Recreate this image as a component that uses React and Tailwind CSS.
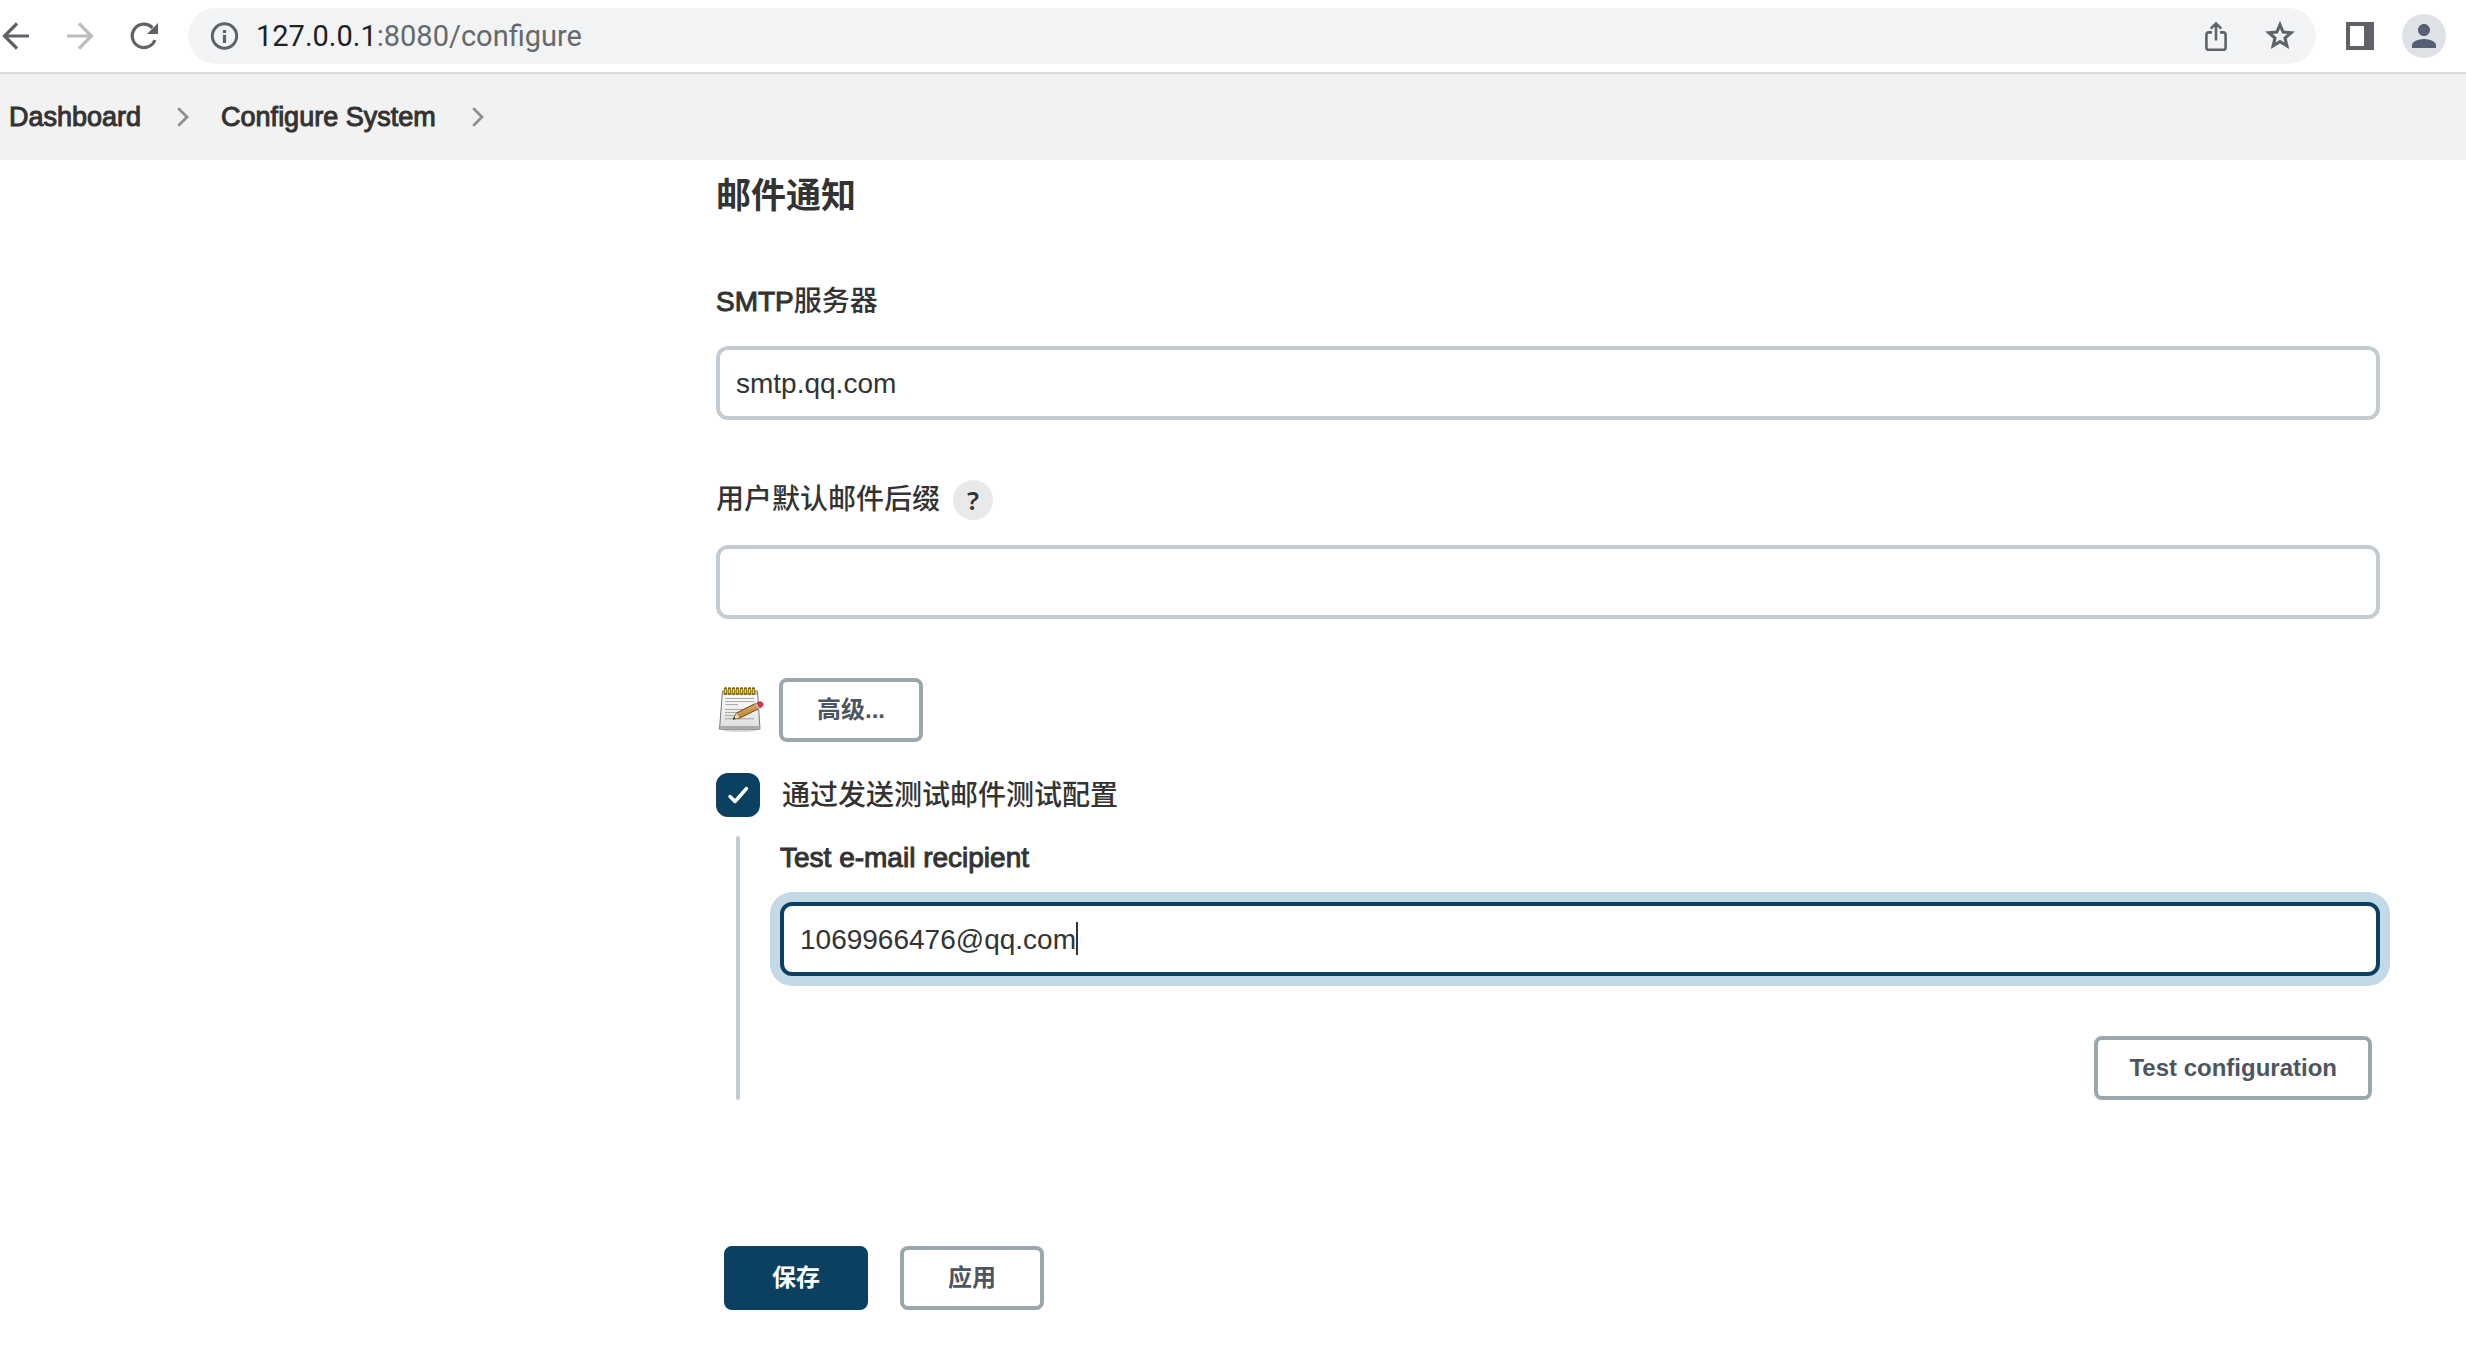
import { useState } from "react";
import { MdPerson } from "react-icons/md";

function BackIcon({ className }) {
  return (
    <svg viewBox="0 0 32 32" className={className} fill="none" stroke="currentColor" strokeWidth="3.2">
      <path d="M29 16H5M17 3.5 4.5 16 17 28.5" />
    </svg>
  );
}

function ReloadIcon() {
  return (
    <svg viewBox="0 0 32 32" className="size-8" fill="none">
      <path d="M26.9 20A11.7 11.7 0 1 1 24.4 7.8" stroke="currentColor" strokeWidth="3.2" />
      <path d="M30 3v11H19z" fill="currentColor" />
    </svg>
  );
}

function InfoIcon() {
  return (
    <svg viewBox="0 0 28 28" className="size-7 text-[#5f6368]" fill="none">
      <circle cx="14.5" cy="14" r="12.2" stroke="currentColor" strokeWidth="3" />
      <path d="M12.9 8h3.2v3h-3.2zM12.9 12.8h3.2V21h-3.2z" fill="currentColor" />
    </svg>
  );
}

function ShareIcon() {
  return (
    <svg viewBox="0 0 32 32" className="size-8" fill="none" stroke="currentColor" strokeWidth="2.6">
      <path d="M12 12.4H9a2.6 2.6 0 0 0-2.6 2.6v12.2A2.6 2.6 0 0 0 9 29.8h14a2.6 2.6 0 0 0 2.6-2.6V15a2.6 2.6 0 0 0-2.6-2.6h-3" />
      <path d="M16 20.5V4M10.8 8.6 16 3.5l5.2 5.1" />
    </svg>
  );
}

function StarIcon() {
  return (
    <svg viewBox="0 0 24 24" className="size-9" fill="none" stroke="currentColor" strokeWidth="2.1">
      <path d="M12 4.5l2.07 4.9 5.3.46-4.02 3.49 1.2 5.18L12 15.78l-4.55 2.75 1.2-5.18-4.02-3.49 5.3-.46z" />
    </svg>
  );
}

function SidePanelIcon() {
  return (
    <svg viewBox="0 0 28 28" className="size-7">
      <path d="M0 0h28v28H0zM4 4v20h14V4z" fill="#5f6368" fillRule="evenodd" />
    </svg>
  );
}

function Chevron() {
  return (
    <svg viewBox="0 0 12 20" className="h-5 w-3 text-[#8f8f8f]" fill="none" stroke="currentColor" strokeWidth="2.8" strokeLinecap="round">
      <path d="M2 2l8 8-8 8" />
    </svg>
  );
}

function NotepadIcon() {
  return (
    <svg viewBox="0 0 48 48" className="size-12 shrink-0" fill="none">
      <defs>
        <linearGradient id="paper" x1="0" y1="0" x2="0" y2="1">
          <stop offset="0" stopColor="#ffffff" />
          <stop offset="1" stopColor="#dedede" />
        </linearGradient>
        <linearGradient id="wood" x1="0" y1="0" x2="0.5" y2="1">
          <stop offset="0" stopColor="#f0c070" />
          <stop offset="1" stopColor="#b97a2c" />
        </linearGradient>
      </defs>
      <ellipse cx="24" cy="44.2" rx="17" ry="1.8" fill="#000" opacity="0.15" />
      <path d="M6.5 5h35L44 43.2H3.5z" fill="url(#paper)" stroke="#777" strokeWidth="1" />
      <path d="M6.4 5h35.2l.3 4H6.2z" fill="#999" opacity="0.6" />
      <path d="M4.2 40h39.4l.2 2.8H4z" fill="#a9a9a9" />
      <path
        d="M9 12.5h29M9 15.6h29M9 18.6h13M9 23.4h29M9 26.6h22M9 29.6h16M9 32.8h29"
        stroke="#a6a6a6"
        strokeWidth="1"
      />
      <path
        d="M9.5 2.6v5M13.5 2.6v5M17.5 2.6v5M21.5 2.6v5M25.5 2.6v5M29.5 2.6v5M33.5 2.6v5M37.5 2.6v5"
        stroke="#7c6710"
        strokeWidth="3.2"
        strokeLinecap="round"
      />
      <path
        d="M9.5 3.2v4M13.5 3.2v4M17.5 3.2v4M21.5 3.2v4M25.5 3.2v4M29.5 3.2v4M33.5 3.2v4M37.5 3.2v4"
        stroke="#f0d848"
        strokeWidth="1.6"
      />
      <path d="M17 33.2l3.6-6.2 19-9.6 3 5.4-19.2 9.4z" fill="url(#wood)" stroke="#6b4515" strokeWidth="1" strokeLinejoin="round" />
      <path d="M20.8 27.2l2.6 4.8-6.2 1.1z" fill="#f3d9a8" />
      <path d="M17 33.2l1.3-2.4 1.1 1.9z" fill="#222" />
      <path d="M39 17.7l2-1 3 5.3-2 1.1z" fill="#b9bcc0" />
      <path d="M41 16.7c2.6-1.4 5-.9 5.8.6.8 1.6-.4 3.5-2.8 4.7z" fill="#e2333c" stroke="#a01f26" strokeWidth="0.7" />
    </svg>
  );
}

function BrowserBar() {
  return (
    <header className="flex h-[74px] items-center border-b-2 border-[#dadcde] bg-white pr-5 text-[#5f6368]">
      <nav className="mr-7 flex gap-8">
        <button aria-label="Back"><BackIcon className="size-8" /></button>
        <button aria-label="Forward"><BackIcon className="size-8 rotate-180 text-[#babcbe]" /></button>
        <button aria-label="Reload"><ReloadIcon /></button>
      </nav>
      <div className="flex h-14 flex-1 items-center rounded-full bg-[#f1f3f4] pr-[18px] pl-[22px]">
        <InfoIcon />
        <p className="ml-[18px] flex-1 font-[Roboto,sans-serif] text-[29px] leading-8 text-[#66696c]">
          <span className="text-[#202124]">127.0.0.1</span>:8080/configure
        </p>
        <button aria-label="Share" className="mr-[30px]"><ShareIcon /></button>
        <button aria-label="Bookmark"><StarIcon /></button>
      </div>
      <button aria-label="Side panel" className="ml-[30px]"><SidePanelIcon /></button>
      <button aria-label="Profile" className="ml-7 flex size-11 items-center justify-center rounded-full bg-[#dee1e6] text-[#566074]">
        <MdPerson className="size-9" />
      </button>
    </header>
  );
}

function Breadcrumbs() {
  return (
    <nav className="flex h-[86px] items-center bg-[#f2f2f2] pl-[9px] text-[27px] leading-8 [-webkit-text-stroke:1px_#333]">
      <a href="#dashboard">Dashboard</a>
      <span className="mr-8 ml-9"><Chevron /></span>
      <a href="#configure">Configure System</a>
      <span className="ml-9"><Chevron /></span>
    </nav>
  );
}

const inputClass = "block h-[74px] w-full rounded-xl border-4 bg-white px-4 pt-0.5 text-[28px] outline-none";
const labelClass = "text-[28px] leading-10 font-medium";
const latinClass = "[-webkit-text-stroke:1px_#333]";

function Button({ primary, children }) {
  return (
    <button
      type="button"
      className={`h-16 min-w-36 rounded-lg border-4 px-[31px] text-2xl font-bold ${
        primary ? "border-[#0b4060] bg-[#0b4060] text-white" : "border-[#9ba7af] bg-white text-[#4d5561]"
      }`}
    >
      {children}
    </button>
  );
}

export default function App() {
  const [server, setServer] = useState("smtp.qq.com");
  const [suffix, setSuffix] = useState("");
  const [testing, setTesting] = useState(true);
  const [recipient, setRecipient] = useState("1069966476@qq.com");

  return (
    <div className="min-h-screen bg-white font-['Liberation_Sans','Noto_Sans_CJK_SC',sans-serif] text-[#333]">
      <BrowserBar />
      <Breadcrumbs />

      <main className="pt-4 pr-[86px] pb-14 pl-[716px]">
        <h2 className="text-[35px] leading-10 font-bold">邮件通知</h2>

        <div className="mt-[66px]">
          <label htmlFor="server" className={`mb-6 block ${labelClass}`}>
            <span className={latinClass}>SMTP</span>服务器
          </label>
          <input id="server" value={server} onChange={(e) => setServer(e.target.value)} className={`border-[#c3ccd2] ${inputClass}`} />
        </div>

        <div className="mt-[60px]">
          <div className="mb-[25px] flex items-center gap-[13px]">
            <label htmlFor="suffix" className={labelClass}>用户默认邮件后缀</label>
            <button
              type="button"
              aria-label="Help"
              className="size-10 rounded-full bg-[#e9e9e9] font-['Noto_Sans',sans-serif] text-[26px] leading-10 font-semibold"
            >
              ?
            </button>
          </div>
          <input id="suffix" value={suffix} onChange={(e) => setSuffix(e.target.value)} className={`border-[#c3ccd2] ${inputClass}`} />
        </div>

        <div className="mt-[59px] flex items-center gap-[15px]">
          <NotepadIcon />
          <Button>高级...</Button>
        </div>

        <div className="mt-[31px] flex items-center">
          <span className="relative size-11">
            <input
              id="testing"
              type="checkbox"
              checked={testing}
              onChange={(e) => setTesting(e.target.checked)}
              className="block size-11 appearance-none rounded-xl border-4 border-[#c3ccd2] checked:border-[#0b4060] checked:bg-[#0b4060]"
            />
            {testing && (
              <svg viewBox="0 0 44 44" className="pointer-events-none absolute inset-0" fill="none" stroke="#fff" strokeWidth="3.4" strokeLinecap="round" strokeLinejoin="round">
                <path d="M14 23.5l5 5L30.5 15.5" />
              </svg>
            )}
          </span>
          <label htmlFor="testing" className={`ml-[22px] pt-0.5 ${labelClass}`}>通过发送测试邮件测试配置</label>
        </div>

        {testing && (
          <div className="mt-[19px] ml-5 flex">
            <div className="w-1 rounded-full bg-[#c3ccd2]" />
            <div className="ml-10 flex-1 pt-0.5">
              <label htmlFor="recipient" className={`mb-6 block ${labelClass} ${latinClass}`}>Test e-mail recipient</label>
              <div className="relative">
                <input
                  id="recipient"
                  value={recipient}
                  onChange={(e) => setRecipient(e.target.value)}
                  className={`border-[#0b4060] ring-[10px] ring-[#c4d9e6] ${inputClass}`}
                />
                <span className="pointer-events-none absolute top-5 left-[296px] h-[33px] w-0.5 bg-[#333]" />
              </div>
              <div className="mt-[60px] flex justify-end pr-2">
                <Button>Test configuration</Button>
              </div>
            </div>
          </div>
        )}

        <div className="mt-[146px] flex gap-8 pl-2">
          <Button primary>保存</Button>
          <Button>应用</Button>
        </div>
      </main>
    </div>
  );
}
